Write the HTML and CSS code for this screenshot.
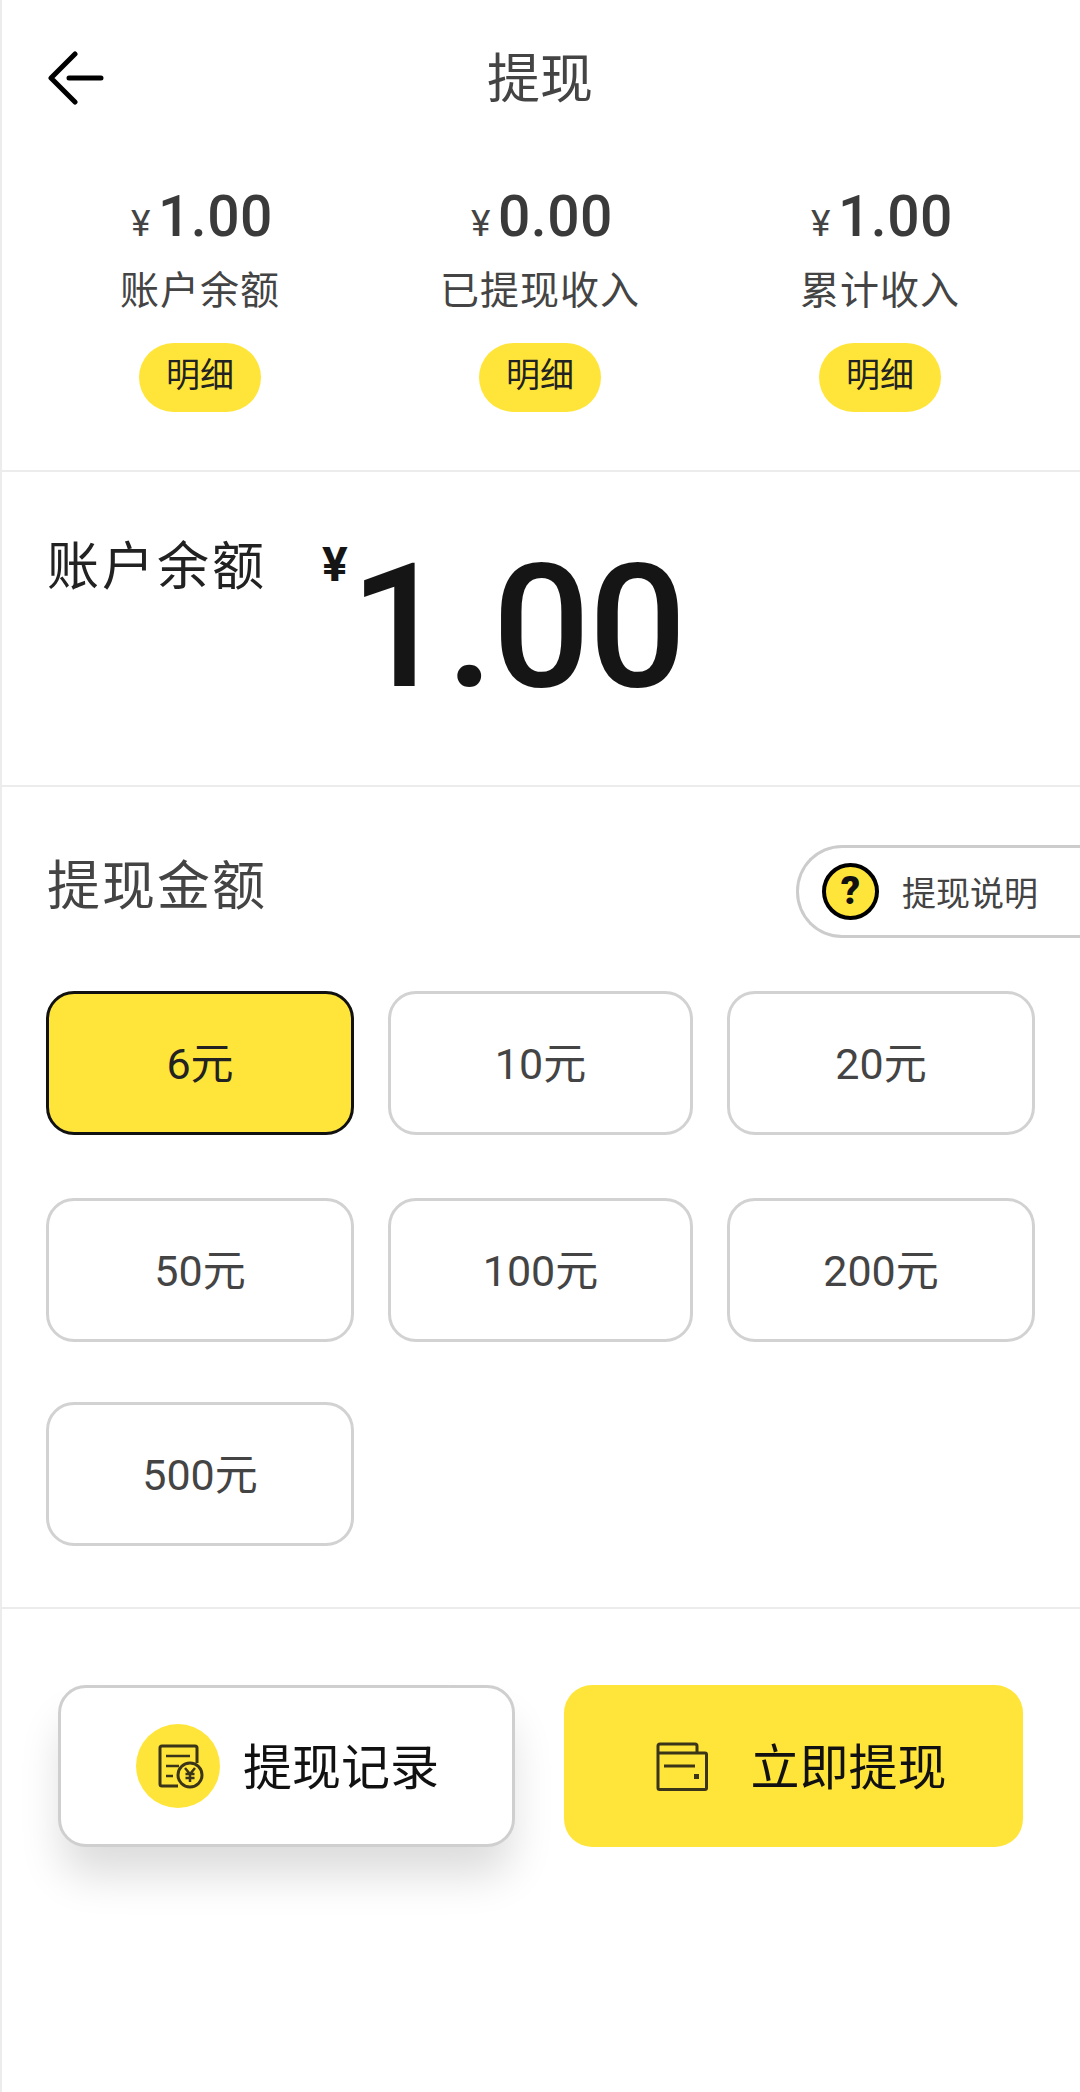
FILE: index.html
```
<!DOCTYPE html>
<html lang="zh-CN">
<head>
<meta charset="utf-8">
<title>提现</title>
<link rel="stylesheet" href="styles.css">
</head>
<body>
<div class="page">
  <header class="nav">
    <svg class="back" viewBox="0 0 56 54" aria-hidden="true"><path d="M27 3 3 27l24 24M21 27h32"/></svg>
    <h1 class="title">提现</h1>
  </header>

  <section class="stats">
    <div class="stat">
      <div class="stat-amount"><span class="stat-cur">¥</span>1.00</div>
      <div class="stat-label">账户余额</div>
      <div class="badge">明细</div>
    </div>
    <div class="stat">
      <div class="stat-amount"><span class="stat-cur">¥</span>0.00</div>
      <div class="stat-label">已提现收入</div>
      <div class="badge">明细</div>
    </div>
    <div class="stat">
      <div class="stat-amount"><span class="stat-cur">¥</span>1.00</div>
      <div class="stat-label">累计收入</div>
      <div class="badge">明细</div>
    </div>
  </section>

  <section class="balance">
    <div class="balance-label">账户余额</div>
    <div class="balance-cur">¥</div>
    <div class="balance-num">1.00</div>
  </section>

  <section class="withdraw">
    <div class="withdraw-head">
      <h2 class="withdraw-title">提现金额</h2>
      <div class="help">
        <span class="help-icon">?</span>
        <span class="help-text">提现说明</span>
      </div>
    </div>
    <div class="options">
      <div class="option selected">6元</div>
      <div class="option">10元</div>
      <div class="option">20元</div>
      <div class="option">50元</div>
      <div class="option">100元</div>
      <div class="option">200元</div>
      <div class="option">500元</div>
    </div>
  </section>

  <section class="actions">
    <div class="action action-record">
      <span class="record-icon">
        <svg viewBox="0 0 84 84" aria-hidden="true">
          <path class="ic" d="M42 62H26a2 2 0 0 1-2-2V24a2 2 0 0 1 2-2h33a2 2 0 0 1 2 2v15"/>
          <path class="ic thin" d="M30 32h24M30 42h13M30 52h7"/>
          <circle class="ic" cx="54" cy="51" r="12"/>
          <path class="ic thin" d="m49 44 5 6 5-6M54 50v8M49.500 50h9M49.500 54h9"/>
        </svg>
      </span>
      <span class="action-text">提现记录</span>
    </div>
    <div class="action action-go">
      <svg class="wallet" viewBox="0 0 52 49" aria-hidden="true">
        <path class="ic" d="M2 11V4a2 2 0 0 1 2-2h35a2 2 0 0 1 2 2v7M2 11h47a1.500 1.500 0 0 1 1.500 1.500V46a1.500 1.500 0 0 1-1.500 1.500H3.500A1.500 1.500 0 0 1 2 46z"/>
        <path class="ic" d="M8 24h31"/>
        <rect class="ic-dot" x="38" y="32" width="5" height="5"/>
      </svg>
      <span class="action-text">立即提现</span>
    </div>
  </section>
</div>
</body>
</html>
```
FILE: styles.css
```
* { box-sizing: border-box; }
html, body { margin: 0; padding: 0; background: #fff; }
body {
  font-family: Roboto, "Noto Sans CJK SC", sans-serif;
  color: #444;
}
.page {
  width: 1080px;
  height: 2092px;
  border-left: 2px solid #ececec;
  overflow: hidden;
}

.nav {
  height: 160px;
  margin-left: -2px;
  padding-top: 4px;
  display: flex;
  align-items: center;
  justify-content: center;
  position: relative;
}
.back {
  position: absolute;
  left: 48px;
  top: 51px;
  width: 56px;
  height: 54px;
  fill: none;
  stroke: #000;
  stroke-width: 5;
  stroke-linecap: round;
  stroke-linejoin: round;
}
.title {
  margin: 0 0 4px;
  font-size: 53px;
  line-height: 72px;
  font-weight: 400;
  color: #444;
}

.stats {
  height: 312px;
  margin-left: -2px;
  padding: 21px 30px 0;
  display: grid;
  grid-template-columns: repeat(3, 340px);
  border-bottom: 2px solid #ececec;
}
.stat {
  display: flex;
  flex-direction: column;
  align-items: center;
}
.stat-amount {
  padding-left: 4px;
  font-size: 57px;
  line-height: 72px;
  font-weight: 500;
  color: #3a3a3a;
  letter-spacing: 0.5px;
}
.stat-cur {
  font-size: 37px;
  font-weight: 400;
  margin-right: 7px;
  color: #444;
}
.stat-label {
  margin-top: 3px;
  font-size: 39px;
  line-height: 56px;
  letter-spacing: 1px;
  color: #444;
}
.badge {
  margin-top: 24px;
  width: 122px;
  height: 69px;
  border-radius: 35px;
  background: #ffe53a;
  color: #222;
  font-size: 34px;
  line-height: 64px;
  text-align: center;
}

.balance {
  height: 315px;
  margin-left: -2px;
  padding-left: 47px;
  display: flex;
  align-items: flex-start;
  border-bottom: 2px solid #ececec;
}
.balance-label {
  margin-top: 60px;
  font-size: 52px;
  line-height: 72px;
  letter-spacing: 3px;
  color: #222;
}
.balance-cur {
  margin: 66px 0 0 55px;
  font-size: 48px;
  line-height: 54px;
  font-weight: 700;
  color: #151515;
}
.balance-num {
  margin: 54px 0 0 2px;
  font-size: 173px;
  line-height: 203px;
  font-weight: 500;
  letter-spacing: -2px;
  color: #151515;
}

.withdraw {
  height: 822px;
  margin-left: -2px;
  border-bottom: 2px solid #ececec;
}
.withdraw-head {
  height: 204px;
  padding: 58px 0 0 47px;
  display: flex;
  justify-content: space-between;
  align-items: flex-start;
}
.withdraw-title {
  margin: 4px 0 0;
  font-size: 53px;
  line-height: 76px;
  font-weight: 400;
  letter-spacing: 2px;
  color: #444;
}
.help {
  width: 290px;
  height: 93px;
  margin-right: -6px;
  padding-left: 23px;
  display: flex;
  align-items: center;
  gap: 23px;
  border: 3px solid #ccc;
  border-right: 0;
  border-radius: 46px 0 0 46px;
}
.help-icon {
  width: 57px;
  height: 57px;
  border: 4px solid #000;
  border-radius: 50%;
  background: #ffe53a;
  color: #111;
  font-size: 38px;
  line-height: 49px;
  font-weight: 900;
  text-align: center;
}
.help-text {
  padding-top: 5px;
  font-size: 34px;
  line-height: 44px;
  color: #444;
}

.options {
  padding-left: 46px;
  display: grid;
  grid-template-columns: 308px 305px 308px;
  grid-template-rows: 147px 144px 144px;
  column-gap: 34px;
  row-gap: 60px;
}
.option {
  height: 144px;
  padding-bottom: 6px;
  display: flex;
  align-items: center;
  justify-content: center;
  border: 3px solid #d2d2d2;
  border-radius: 28px;
  font-size: 43px;
  color: #444;
}
.option.selected {
  border-color: #111;
  background: #ffe53a;
  color: #222;
}

.actions {
  margin-left: -2px;
  padding: 76px 0 0 58px;
  display: flex;
  gap: 49px;
}
.action {
  display: flex;
  align-items: center;
  justify-content: center;
  height: 162px;
  border-radius: 28px;
}
.action-record {
  width: 457px;
  padding-left: 2px;
  gap: 23px;
  background: #fff;
  border: 3px solid #cfcfcf;
  box-shadow: 0 32px 44px -4px rgba(0, 0, 0, 0.14);
}
.action-go {
  width: 459px;
  padding-left: 16px;
  gap: 42px;
  background: #ffe53a;
}
.record-icon {
  width: 84px;
  height: 84px;
  border-radius: 50%;
  background: #ffe53a;
}
.record-icon svg { display: block; width: 84px; height: 84px; }
.wallet { width: 52px; height: 49px; }
.ic { fill: none; stroke: #3a3418; stroke-width: 3; }
.ic.thin { stroke-width: 2.500; }
.ic-dot { fill: #3a3418; }
.action-text {
  padding-top: 5px;
  font-size: 49px;
  line-height: 68px;
  color: #111;
}
```
